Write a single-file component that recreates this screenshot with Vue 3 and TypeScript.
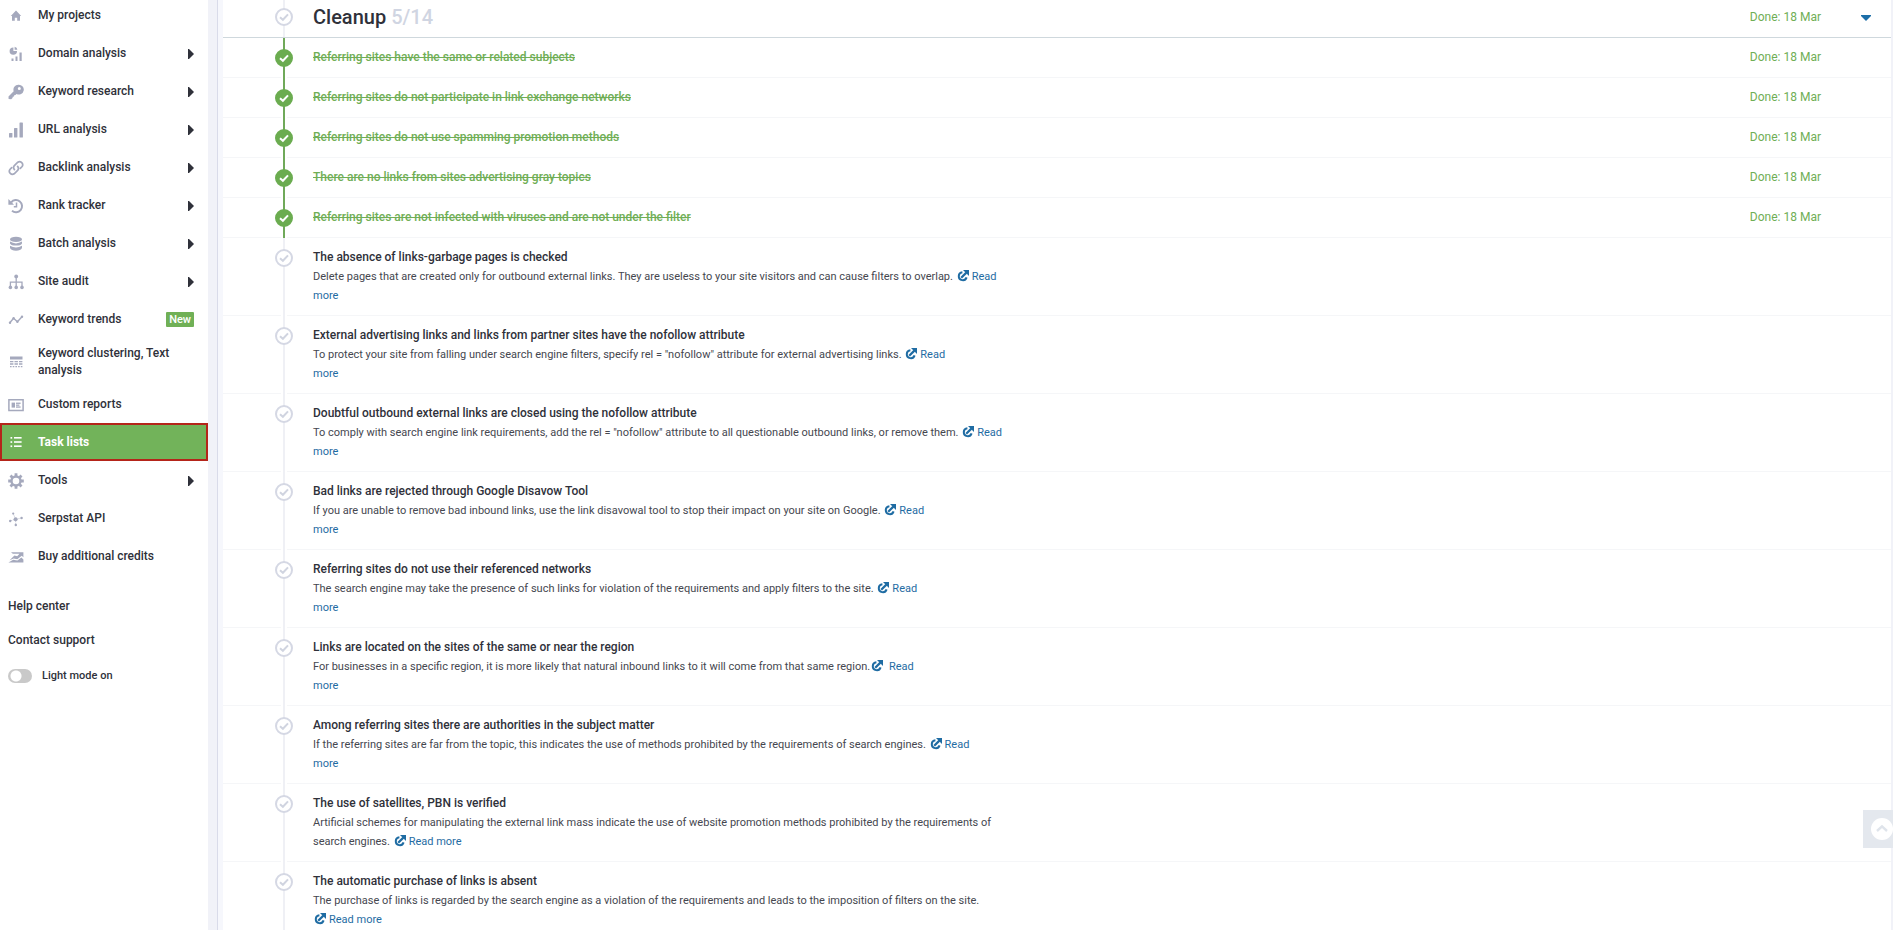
<script setup lang="ts">
import { ref } from 'vue'

type IconName =
  | 'home' | 'domain' | 'key' | 'bars' | 'link' | 'history' | 'database' | 'sitemap'
  | 'trend' | 'table' | 'report' | 'list' | 'gear' | 'api' | 'credits'

interface NavItem {
  label: string
  icon: IconName
  submenu?: boolean
  badge?: string
  active?: boolean
}

interface Task {
  title: string
  lines?: string[]
  link?: string[]
  done?: string
}

const nav: NavItem[] = [
  { label: 'My projects', icon: 'home' },
  { label: 'Domain analysis', icon: 'domain', submenu: true },
  { label: 'Keyword research', icon: 'key', submenu: true },
  { label: 'URL analysis', icon: 'bars', submenu: true },
  { label: 'Backlink analysis', icon: 'link', submenu: true },
  { label: 'Rank tracker', icon: 'history', submenu: true },
  { label: 'Batch analysis', icon: 'database', submenu: true },
  { label: 'Site audit', icon: 'sitemap', submenu: true },
  { label: 'Keyword trends', icon: 'trend', badge: 'New' },
  { label: 'Keyword clustering, Text analysis', icon: 'table' },
  { label: 'Custom reports', icon: 'report' },
  { label: 'Task lists', icon: 'list', active: true },
  { label: 'Tools', icon: 'gear', submenu: true },
  { label: 'Serpstat API', icon: 'api' },
  { label: 'Buy additional credits', icon: 'credits' },
]

const tasks = ref<Task[]>([
  { title: 'Referring sites have the same or related subjects', done: '18 Mar' },
  { title: 'Referring sites do not participate in link exchange networks', done: '18 Mar' },
  { title: 'Referring sites do not use spamming promotion methods', done: '18 Mar' },
  { title: 'There are no links from sites advertising gray topics', done: '18 Mar' },
  { title: 'Referring sites are not infected with viruses and are not under the filter', done: '18 Mar' },
  {
    title: 'The absence of links-garbage pages is checked',
    lines: ['Delete pages that are created only for outbound external links. They are useless to your site visitors and can cause filters to overlap. '],
    link: ['Read', 'more'],
  },
  {
    title: 'External advertising links and links from partner sites have the nofollow attribute',
    lines: ['To protect your site from falling under search engine filters, specify rel = "nofollow" attribute for external advertising links. '],
    link: ['Read', 'more'],
  },
  {
    title: 'Doubtful outbound external links are closed using the nofollow attribute',
    lines: ['To comply with search engine link requirements, add the rel = "nofollow" attribute to all questionable outbound links, or remove them. '],
    link: ['Read', 'more'],
  },
  {
    title: 'Bad links are rejected through Google Disavow Tool',
    lines: ['If you are unable to remove bad inbound links, use the link disavowal tool to stop their impact on your site on Google. '],
    link: ['Read', 'more'],
  },
  {
    title: 'Referring sites do not use their referenced networks',
    lines: ['The search engine may take the presence of such links for violation of the requirements and apply filters to the site. '],
    link: ['Read', 'more'],
  },
  {
    title: 'Links are located on the sites of the same or near the region',
    lines: ['For businesses in a specific region, it is more likely that natural inbound links to it will come from that same region.'],
    link: [' Read', 'more'],
  },
  {
    title: 'Among referring sites there are authorities in the subject matter',
    lines: ['If the referring sites are far from the topic, this indicates the use of methods prohibited by the requirements of search engines. '],
    link: ['Read', 'more'],
  },
  {
    title: 'The use of satellites, PBN is verified',
    lines: [
      'Artificial schemes for manipulating the external link mass indicate the use of website promotion methods prohibited by the requirements of',
      'search engines. ',
    ],
    link: ['Read more'],
  },
  {
    title: 'The automatic purchase of links is absent',
    lines: [
      'The purchase of links is regarded by the search engine as a violation of the requirements and leads to the imposition of filters on the site.',
      '',
    ],
    link: ['Read more'],
  },
])

const lightMode = ref(false)
const open = ref(true)
</script>

<template>
  <div class="page">
    <aside class="sidebar">
      <nav>
        <a v-for="item in nav" :key="item.label" href="#" class="nav-item" :class="{ active: item.active }">
          <svg class="nav-icon" viewBox="0 0 16 16" width="16" height="16" aria-hidden="true">
            <path v-if="item.icon === 'home'" fill="currentColor" d="M8 2.6 L13.2 8 H12 V12.8 H9.2 V9.8 H6.8 V12.8 H4 V8 H2.8 Z" />
            <g v-else-if="item.icon === 'domain'" fill="currentColor">
              <path d="M5.4 1.4 V5 H9 A3.7 3.7 0 1 1 5.4 1.4 Z" />
              <path d="M6.6 .8 A3.4 3.4 0 0 1 9.4 3.8 H6.6 Z" />
              <rect x="3.5" y="12.5" width="2" height="2.5" /><rect x="7.5" y="10.5" width="2" height="4.5" /><rect x="11.5" y="6.5" width="2.2" height="8.5" />
            </g>
            <path v-else-if="item.icon === 'key'" fill="currentColor" fill-rule="evenodd" d="M10.3 .8 A4.9 4.9 0 1 1 8.6 10 L7.4 11.1 L6.2 11.2 L6 12.5 L4.8 12.8 L4.5 14 L3.2 15.2 L.6 15 L.5 12.6 L5.7 7.3 A4.9 4.9 0 0 1 10.3 .8 Z M11.3 3 A1.5 1.5 0 1 0 11.3 6 A1.5 1.5 0 1 0 11.3 3 Z" />
            <g v-else-if="item.icon === 'bars'" fill="currentColor">
              <rect x="1" y="11" width="3.4" height="4.5" rx=".6" /><rect x="6" y="6" width="3.4" height="9.5" rx=".6" /><rect x="11.5" y=".5" width="3.4" height="15" rx=".6" />
            </g>
            <g v-else-if="item.icon === 'link'" fill="none" stroke="currentColor" stroke-width="1.7" stroke-linecap="round">
              <path d="M6.4 9.6 A3.1 3.1 0 0 1 6.6 5.4 L9.8 2.2 A3.1 3.1 0 0 1 14.1 6.5 L12.3 8.3" />
              <path d="M9.6 6.4 A3.1 3.1 0 0 1 9.4 10.6 L6.2 13.8 A3.1 3.1 0 0 1 1.9 9.5 L3.7 7.7" />
            </g>
            <g v-else-if="item.icon === 'history'" fill="none" stroke="currentColor">
              <path stroke-width="2" d="M3.2 4.3 A6.1 6.1 0 1 1 4 12.8" />
              <path stroke-width="1.5" d="M8.5 4.5 V8.7 H5.8" />
              <path fill="currentColor" stroke="none" d="M.4 1 V6.7 H6 Z" />
            </g>
            <g v-else-if="item.icon === 'database'" fill="currentColor">
              <ellipse cx="8" cy="3.4" rx="6" ry="2.6" />
              <path d="M2 5.6 Q8 9.2 14 5.6 V7.4 Q12.7 9.6 8 9.6 T2 7.4 Z" />
              <path d="M2 9.8 Q8 13.4 14 9.8 V12 Q12.7 14.8 8 14.8 T2 12 Z" />
            </g>
            <g v-else-if="item.icon === 'sitemap'" fill="currentColor">
              <circle cx="8.2" cy="2.4" r="1.9" /><circle cx="2.4" cy="13.4" r="1.8" /><circle cx="8.2" cy="13.4" r="1.8" /><circle cx="14" cy="13.4" r="1.8" />
              <path fill="none" stroke="currentColor" stroke-width="1.3" d="M8.2 3 V13 M2.4 13 V8.2 H14 V13" />
            </g>
            <g v-else-if="item.icon === 'trend'" fill="currentColor">
              <path fill="none" stroke="currentColor" stroke-width="1.4" d="M1.8 10.8 L5.6 6.2 L9.4 9.8 L14 4.8" />
              <circle cx="2" cy="10.8" r="1.2" /><circle cx="5.6" cy="6.2" r="1.2" /><circle cx="9.4" cy="9.8" r="1.2" /><circle cx="14" cy="4.8" r="1.2" />
            </g>
            <g v-else-if="item.icon === 'table'" fill="currentColor">
              <rect x="2" y="2.5" width="12.5" height="3" />
              <path fill="none" stroke="currentColor" stroke-width="1.3" stroke-dasharray="3.4 1.1" d="M2 7.6 H14.5 M2 10 H14.5" />
              <path fill="none" stroke="currentColor" stroke-width="1.2" stroke-dasharray="1.6 1.1" d="M2 12.6 H14.5" />
            </g>
            <g v-else-if="item.icon === 'report'" fill="currentColor">
              <path fill="none" stroke="currentColor" stroke-width="1.5" d="M.9 2.7 H15.1 V13.5 H.9 Z" />
              <rect x="3.6" y="5.6" width="3.4" height="5" /><rect x="8" y="5.6" width="4.6" height="1.3" /><rect x="8" y="7.5" width="3.4" height="1.3" /><rect x="8" y="9.4" width="4.6" height="1.3" />
            </g>
            <g v-else-if="item.icon === 'list'" fill="currentColor">
              <rect x="2.5" y="3" width="1.7" height="1.7" /><rect x="2.5" y="7.2" width="1.7" height="1.7" /><rect x="2.5" y="11.4" width="1.7" height="1.7" />
              <rect x="6" y="3" width="7.6" height="1.6" /><rect x="6" y="7.2" width="7.6" height="1.6" /><rect x="6" y="11.4" width="7.6" height="1.6" />
            </g>
            <g v-else-if="item.icon === 'gear'" fill="none" stroke="currentColor">
              <circle cx="8" cy="8" r="4.5" stroke-width="2.4" />
              <path stroke-width="2.8" d="M8 .2 V3 M8 13 V15.8 M.2 8 H3 M13 8 H15.8 M2.5 2.5 L4.4 4.4 M11.6 11.6 L13.5 13.5 M2.5 13.5 L4.4 11.6 M11.6 4.4 L13.5 2.5" />
            </g>
            <g v-else-if="item.icon === 'api'" fill="currentColor">
              <circle cx="7.6" cy="8.2" r="2" /><circle cx="5.2" cy="2.6" r="1.1" /><circle cx="13.6" cy="7" r="1.2" /><circle cx="2.2" cy="10" r="1.2" /><circle cx="7.8" cy="14" r="1.2" />
              <path fill="none" stroke="currentColor" stroke-width=".7" stroke-dasharray="1 1" d="M7.6 8.2 L5.2 2.6 M7.6 8.2 L13.6 7 M7.6 8.2 L2.2 10 M7.6 8.2 L7.8 14" />
            </g>
            <g v-else fill="currentColor">
              <path d="M3 3.2 H15.4 V8.2 L13.7 6.8 L9.3 10.2 L5.6 9.4 L1.6 11.2 L6.4 6.4 L9.2 7.2 L11.5 4.8 H4.8 Z" />
              <path d="M.4 13.6 L5.2 10.8 L9.4 11.6 L13.4 8.6 L15.4 10.4 V13.6 Z" />
            </g>
          </svg>
          <span class="nav-label">{{ item.label }}</span>
          <span v-if="item.badge" class="badge">{{ item.badge }}</span>
          <svg v-if="item.submenu" class="nav-arrow" viewBox="0 0 6 10" width="6" height="10" aria-hidden="true">
            <path fill="currentColor" d="M0 0 H1 L6 5 L1 10 H0 Z" />
          </svg>
        </a>
      </nav>
      <div class="support">
        <a href="#">Help center</a>
        <a href="#">Contact support</a>
        <label class="mode">
          <input v-model="lightMode" type="checkbox" class="switch" />
          <span>Light mode on</span>
        </label>
      </div>
    </aside>

    <main class="content">
      <header class="row head">
        <div class="rail">
          <input id="group" type="checkbox" class="tick" />
          <svg class="mark" viewBox="0 0 18 18" width="18" height="18" aria-hidden="true">
            <path d="M5 9.2 L7.9 11.8 L13 6.4" />
          </svg>
        </div>
        <h2><label for="group">Cleanup</label> <span class="count">5/14</span></h2>
        <span class="date">Done: 18 Mar</span>
        <button class="collapse" type="button" aria-label="Collapse Cleanup" @click="open = !open">
          <svg viewBox="0 0 10 6" width="10" height="6" aria-hidden="true"><path fill="currentColor" d="M0 0 H10 V1 L5 6 L0 1 Z" /></svg>
        </button>
      </header>

      <ul v-if="open" class="tasks">
        <li v-for="(task, i) in tasks" :key="task.title" class="row" :class="{ done: task.done }">
          <div class="rail">
            <input :id="`task-${i}`" type="checkbox" class="tick" :checked="!!task.done" />
            <svg class="mark" viewBox="0 0 18 18" width="18" height="18" aria-hidden="true">
              <path d="M5 9.2 L7.9 11.8 L13 6.4" />
            </svg>
          </div>
          <div class="text">
            <label class="title" :for="`task-${i}`">{{ task.title }}</label>
            <p v-if="task.lines" class="desc"><template v-for="(line, n) in task.lines" :key="n"><br v-if="n > 0" /><span>{{ line }}</span></template><a href="#"><svg class="ext" viewBox="0 0 12 12" width="12" height="12" aria-hidden="true"><path fill="none" stroke="currentColor" stroke-width="2" d="M5.4 2.2 A4 4 0 1 0 9.6 7.4" /><path fill="none" stroke="currentColor" stroke-width="2.2" d="M4.2 7.8 L9.4 2.6" /><path fill="currentColor" d="M6 0 H12 V6 Z" /></svg><template v-for="(part, n) in task.link" :key="n"><br v-if="n > 0" /><span>{{ part }}</span></template></a></p>
          </div>
          <span v-if="task.done" class="date">Done: {{ task.done }}</span>
        </li>
      </ul>
    </main>

    <button class="to-top" type="button" aria-label="Back to top">
      <svg viewBox="0 0 22 22" width="22" height="22" aria-hidden="true">
        <circle cx="11" cy="11" r="11" fill="#fff" />
        <path d="M6 13 L11 8.4 L16 13" fill="none" stroke="#dfe4eb" stroke-width="2.4" />
      </svg>
    </button>
  </div>
</template>

<style>
body {
  margin: 0;
  overflow: hidden;
}
</style>

<style scoped>
.page {
  display: flex;
  height: 100vh;
  overflow: hidden;
  background: #f1f2f8;
  color: #2f313a;
  font-family: Roboto, "Liberation Sans", sans-serif;
  font-size: 12px;
}
a {
  color: inherit;
  text-decoration: none;
}
.sidebar {
  flex: none;
  box-sizing: border-box;
  width: 208px;
  background: #fff;
  font-weight: 500;
}
nav {
  margin-top: -4px;
}
.nav-item {
  display: flex;
  align-items: center;
  box-sizing: border-box;
  min-height: 38px;
  padding: 7px 14px 6px 8px;
  line-height: 17px;
}
.nav-icon {
  flex: none;
  margin-right: 14px;
  color: #a5a9bd;
}
.nav-label {
  flex: 1;
}
.nav-arrow {
  flex: none;
}
.badge {
  padding: 0 3px;
  border-radius: 1px;
  background: #70b056;
  color: #fff;
  font-size: 11px;
  line-height: 15px;
}
.nav-item.active {
  padding: 4px 12px 4px 6px;
  border: 2px solid #b5251a;
  background: #72b35a;
  color: #fff;
  font-weight: 700;
}
.nav-item.active .nav-icon {
  color: #fff;
}
.support {
  display: flex;
  flex-direction: column;
  gap: 14px;
  padding: 21px 8px;
  line-height: 20px;
}
.mode {
  display: flex;
  align-items: center;
  gap: 10px;
  margin-top: 2px;
  font-size: 11px;
}
.switch {
  appearance: none;
  width: 24px;
  height: 14px;
  margin: 0;
  border-radius: 7px;
  background: radial-gradient(circle at 8px 7px, #fff 5px, #c9c9c9 6px);
}
.content {
  flex: 1;
  min-width: 0;
  margin: 0 2px 0 9px;
  border-left: 1px solid #d9dbe9;
  padding-left: 5px;
  background: linear-gradient(90deg, #f6f7fc 5px, #fff 5px);
}
.row {
  display: flex;
  align-items: flex-start;
  position: relative;
  box-sizing: border-box;
  padding: 9px 70px 10px 52px;
  border-bottom: 1px solid #f5f6f8;
}
.rail {
  display: grid;
  place-items: center;
  flex: none;
  width: 18px;
  height: 18px;
  margin: 2px 20px 0 0;
}
.rail::before {
  content: "";
  position: absolute;
  top: 0;
  bottom: -1px;
  left: 60px;
  width: 2px;
  background: #eff0f5;
  box-shadow: 0 0 0 2px #fff;
  clip-path: inset(0 -2px);
}
.tick,
.mark {
  grid-area: 1 / 1;
  position: relative;
}
.tick {
  appearance: none;
  box-sizing: border-box;
  width: 18px;
  height: 18px;
  margin: 0;
  border: 2px solid #d5d8e4;
  border-radius: 50%;
  background: #fff;
}
.mark {
  fill: none;
  stroke: #d0d4e0;
  stroke-width: 2;
  pointer-events: none;
}
.done .rail::before {
  background: #70a95a;
}
.done .tick {
  border-color: #6bac50;
  background: #6bac50;
}
.done .mark {
  stroke: #fff;
}
.head {
  align-items: center;
  height: 38px;
  padding-top: 0;
  padding-bottom: 4px;
  border-color: #cfd8dd;
}
.head .rail {
  margin-top: 0;
}
.head .rail::before {
  bottom: 0;
}
h2 {
  flex: 1;
  margin: 0;
  font-size: 20px;
  font-weight: 500;
  line-height: 34px;
}
.count {
  color: #d0d5e2;
}
.date {
  color: #6fae55;
  line-height: 20px;
}
.collapse {
  position: absolute;
  right: 20px;
  top: 15px;
  display: flex;
  padding: 0;
  border: 0;
  background: none;
  color: #1c6ea8;
}
.tasks {
  margin: 0;
  padding: 0;
  list-style: none;
}
.text {
  flex: 1;
}
.title {
  display: block;
  font-weight: 500;
  line-height: 20px;
}
.done .title {
  color: #70ae56;
  text-decoration: line-through;
}
.desc {
  margin: 0;
  color: #45474f;
  font-size: 11px;
  line-height: 19px;
  white-space: pre-wrap;
}
.desc a {
  color: #1f6ca3;
}
.ext {
  margin: 0 3px 0 1px;
  vertical-align: -2px;
}
.to-top {
  position: fixed;
  right: 0;
  bottom: 82px;
  display: flex;
  align-items: center;
  justify-content: flex-end;
  width: 30px;
  height: 38px;
  padding: 0;
  border: 0;
  background: #e4e8ee;
}
</style>
